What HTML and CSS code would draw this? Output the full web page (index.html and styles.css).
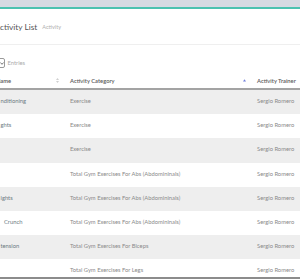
FILE: index.html
```html
<!DOCTYPE html>
<html>
<head>
<meta charset="utf-8">
<link rel="stylesheet" href="styles.css">
</head>
<body>
<div class="topbar"></div>
<div class="accent"></div>
<div class="title-row">
  <h1 class="title">Activity List</h1>
  <span class="crumb">Activity</span>
</div>
<div class="toolbar">
  <span class="select"><svg class="chev" width="4" height="3" viewBox="0 0 4 3"><path d="M0.4 0.5 L2 2.3 L3.6 0.5" fill="none" stroke="#555" stroke-width="0.8"/></svg></span>
  <span class="entries">Entries</span>
</div>
<div class="table-wrap">
  <div class="grid">
    <div class="row head">
      <div class="cell"><span class="h-name">Name</span><svg class="sort" width="3" height="5" viewBox="0 0 3 5"><path d="M1.5 0 L3 2 L0 2 Z M1.5 5 L3 3 L0 3 Z" fill="#d0d0d0"/></svg></div>
      <div class="cell"><span>Activity Category</span><svg class="sort" width="3" height="3" viewBox="0 0 3 3"><path d="M1.5 0.3 L3 2.6 L0 2.6 Z" fill="#7180db"/></svg></div>
      <div class="cell"><span>Activity Trainer</span></div>
    </div>
    <div class="row odd"><div class="cell name">nditioning</div><div class="cell">Exercise</div><div class="cell">Sergio Romero</div></div>
    <div class="row"><div class="cell name">ghts</div><div class="cell">Exercise</div><div class="cell">Sergio Romero</div></div>
    <div class="row odd"><div class="cell name"></div><div class="cell">Exercise</div><div class="cell">Sergio Romero</div></div>
    <div class="row"><div class="cell name"></div><div class="cell">Total Gym Exercises For Abs (Abdomininals)</div><div class="cell">Sergio Romero</div></div>
    <div class="row odd"><div class="cell name">ights</div><div class="cell">Total Gym Exercises For Abs (Abdomininals)</div><div class="cell">Sergio Romero</div></div>
    <div class="row"><div class="cell name indent">Crunch</div><div class="cell">Total Gym Exercises For Abs (Abdomininals)</div><div class="cell">Sergio Romero</div></div>
    <div class="row odd"><div class="cell name">tension</div><div class="cell">Total Gym Exercises For Biceps</div><div class="cell">Sergio Romero</div></div>
    <div class="row"><div class="cell name"></div><div class="cell">Total Gym Exercises For Legs</div><div class="cell">Sergio Romero</div></div>
  </div>
</div>
</body>
</html>
```
FILE: styles.css
```css
html, body {
  margin: 0;
  padding: 0;
}
body {
  width: 300px;
  height: 279px;
  overflow: hidden;
  background: #fff;
  font-family: Lato, "Open Sans", "Liberation Sans", sans-serif;
}
.topbar {
  height: 7px;
  background: #d6dae2;
}
.accent {
  height: 2px;
  background: #4cc2b0;
}
.title-row {
  height: 35px;
  display: flex;
  align-items: center;
  gap: 5px;
  margin-left: -5.5px;
  border-bottom: 1px solid #efefef;
}
.title {
  margin: 0;
  font-size: 8.3px;
  font-weight: 400;
  color: #555;
  line-height: 12px;
}
.crumb {
  font-size: 5.5px;
  color: #b0b0b0;
  line-height: 8px;
  padding-top: 1px;
}
.toolbar {
  display: flex;
  align-items: center;
  padding: 13px 0 4px;
  height: 10px;
}
.select {
  width: 30px;
  height: 10px;
  box-sizing: border-box;
  margin-left: -25px;
  border: 1px solid #9a9a9a;
  border-radius: 2px;
  display: flex;
  align-items: center;
  justify-content: flex-end;
  padding-right: 0.5px;
}
.chev {
  display: block;
}
.entries {
  margin-left: 2.5px;
  font-size: 5.8px;
  color: #aaa;
  line-height: 8px;
}
.table-wrap {
  height: 205px;
  overflow: hidden;
  border-bottom: 2px solid #8c8c8c;
}
.grid {
  margin-left: -12px;
  width: 342px;
}
.row {
  display: grid;
  grid-template-columns: 74px 187px 81px;
  height: 24.2px;
  box-sizing: border-box;
  padding-top: 6px;
  font-size: 5.8px;
  line-height: 9px;
  color: #8a8a8a;
}
.row.odd {
  background: #eeeeee;
}
.row.head {
  height: 18px;
  padding-top: 4px;
  border-bottom: 2px solid #a3a3a3;
  color: #5a5a5a;
  font-weight: 600;
}
.cell {
  padding-left: 8px;
  white-space: nowrap;
  overflow: hidden;
}
.head .cell {
  display: flex;
  align-items: center;
  justify-content: space-between;
  padding-right: 3px;
  height: 9px;
}
.sort {
  display: block;
}
.name {
  padding-left: 12.5px;
  color: #6b7a82;
}
.name.indent {
  padding-left: 16px;
}
```
